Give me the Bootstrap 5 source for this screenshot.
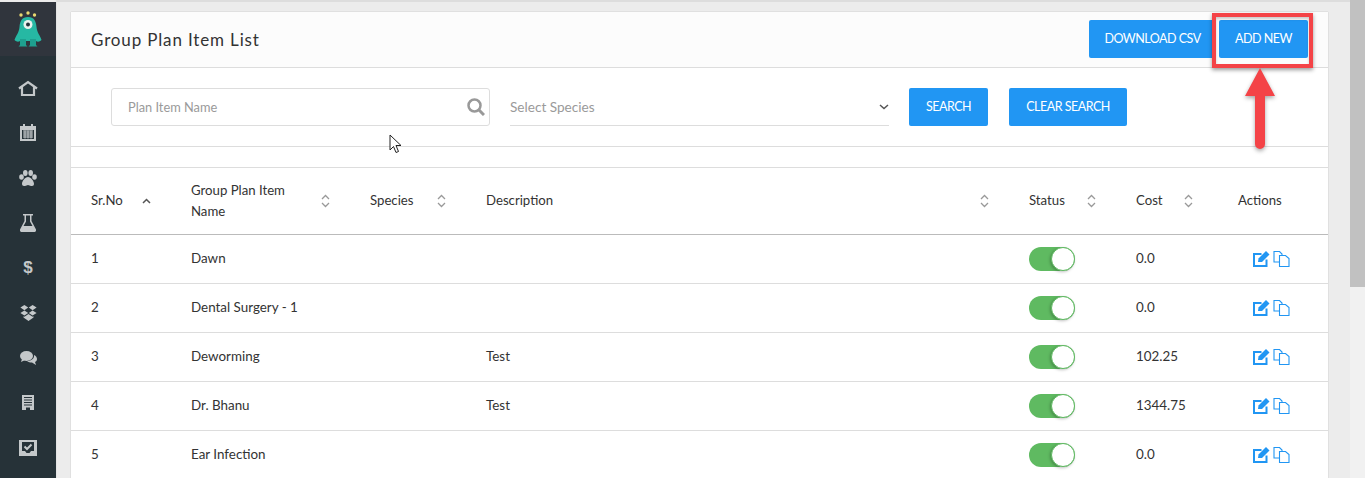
<!DOCTYPE html>
<html lang="en"><head><meta charset="utf-8"><title>Group Plan Item List</title>
<link href="https://cdn.jsdelivr.net/npm/bootstrap@5.3.0/dist/css/bootstrap.min.css" rel="stylesheet">
<style>
html,body{height:478px;overflow:hidden;}
body{font-family:"Lato","Noto Sans",sans-serif;font-size:13.5px;color:#333;background:#ececec;}
.shell{height:478px;}
.side{width:56px;background:#263238;margin-top:2px;flex:none;}
.side-logo{height:54px;background:#30353d;}
.side-item{height:45px;color:#c4c8ca;}
.side-nav{padding-top:9px;}
.dollar{font-family:"Liberation Sans",sans-serif;font-weight:700;font-size:17px;line-height:1;}
.work{flex:1;min-width:0;padding:9px 21px 0 13px;border-top:2px solid #ddd;border-left:1px solid #e4e4e4;}
.scroll-track{width:15px;background:#f1f1f1;flex:none;}
.scroll-thumb{height:287px;background:#c1c1c1;}
.sheet{border:1px solid #e0e0e0;border-radius:2px;background:#fff;height:600px;}
.sheet-head{height:56px;padding:8px 20px 0 20px;background:#fcfcfc;border-bottom:1px solid #ddd;}
.sheet-title{font-size:17px;letter-spacing:.85px;margin:0;font-weight:400;padding-top:10px;color:#333;}
.act{background:#2196f3;color:#fff;border:0;border-radius:2px;height:38px;font-size:12.5px;padding:0;letter-spacing:-.5px;text-transform:uppercase;line-height:38px;}
.act:hover{background:#2196f3;color:#fff;}
.w-dl{width:127px;}.w-add{width:89px;}.w-find{width:79px;}.w-clear{width:118px;}
.head-btns{gap:3px;}
.filters{height:79px;padding:20px 0 0 40px;border-bottom:1px solid #ddd;gap:20px;}
.find{width:379px;height:38px;border:1px solid #ddd;border-radius:3px;padding:0 4px 0 16px;}
.find input{border:0;outline:0;flex:1;font-size:12.8px;color:#999;padding:1px 0 0;background:transparent;min-width:0;}
.find input::placeholder{color:#9a9a9a;}
.pick{width:379px;height:38px;border-bottom:1px solid #ddd;color:#9a9a9a;font-size:13.6px;padding-top:1px;}
.clear-gap{margin-left:1px;}
.gap-strip{height:21px;border-bottom:1px solid #ddd;}
.grid-t{table-layout:fixed;width:100%;margin:0;color:#333;}
.grid-t th{font-weight:400;height:66px;padding:0 0 0 20px;vertical-align:middle;line-height:21px;border-bottom:1px solid #bbb;font-size:13.2px;}
.grid-t td{height:49px;padding:0 0 0 20px;vertical-align:middle;font-size:13.4px;border-bottom:1px solid #ddd;}
.th-in{padding-right:20px;}
.sort{flex:none;color:#999;}
.sort-up{color:#555;}
.tgl{width:46px;height:24px;border-radius:12px;background:#5fba61;position:relative;display:block;}
.tgl::after{content:"";position:absolute;right:0;top:0;width:24px;height:24px;border-radius:50%;background:#fff;border:1px solid #5fba61;box-shadow:-1px 1px 3px rgba(0,0,0,.25);}
.acts{padding-left:15px;gap:3px;}
.cell-actions{padding-left:25px!important;}
.mark-box{position:absolute;left:1212px;top:13px;width:101px;height:55px;border:4px solid #f44347;box-shadow:0 2px 4px rgba(0,0,0,.4),inset 0 2px 3px rgba(0,0,0,.2);pointer-events:none;}
.mark-arrow{position:absolute;left:1240px;top:66px;filter:drop-shadow(0 2px 2px rgba(0,0,0,.35));}
.cursor{position:absolute;left:389px;top:134px;}
</style></head><body>
<div class="shell d-flex">
<aside class="side">
<div class="side-logo d-flex align-items-center justify-content-center">
<svg width="28" height="36" viewBox="0 0 28 36"><circle cx="7" cy="4" r="1.700" fill="#e8d870"/><circle cx="14" cy="2" r="1.700" fill="#e8d870"/><circle cx="20.500" cy="4" r="1.700" fill="#e8d870"/><path d="M14 6C8 6 6 10 5.500 16 5 22 2 24 .5 29c2 2 4 2 5.500 1h16c1.500 1 3.500 1 5.500-1C26 24 23 22 22.500 16 22 10 20 6 14 6z" fill="#26b8a3"/><path d="M6 28h6v6l1.500 1.500h-9L6 34zM16 28h6v6l1.500 1.500h-9L16 34z" fill="#1ea08f"/><circle cx="14" cy="13.500" r="4.500" fill="#e9f2ee"/><circle cx="14" cy="13.500" r="2" fill="#26323a"/></svg>
</div>
<nav class="side-nav">
<div class="side-item d-flex align-items-center justify-content-center"><svg width="20" height="16" viewBox="0 0 20 16" fill="none" stroke="currentColor" stroke-width="2.200"><path d="M1 8.500 10 2l9 6.500M4 7v8h12V7"/></svg></div>
<div class="side-item d-flex align-items-center justify-content-center"><svg width="16" height="17" viewBox="0 0 16 17"><path fill="currentColor" fill-rule="evenodd" d="M0 2h3V0h2v2h6V0h2v2h3v15H0zM2 6v9h12V6z"/><path d="M3 7h10M3 9h10M3 11h10M3 13h10M5 6.500v8M8 6.500v8M11 6.500v8" stroke="currentColor" stroke-width="1"/></svg></div>
<div class="side-item d-flex align-items-center justify-content-center"><svg width="18" height="16" viewBox="0 0 18 16" fill="currentColor"><ellipse cx="2.500" cy="7" rx="2.300" ry="2.800"/><ellipse cx="6.300" cy="3" rx="2.300" ry="3"/><ellipse cx="11.700" cy="3" rx="2.300" ry="3"/><ellipse cx="15.500" cy="7" rx="2.300" ry="2.800"/><path d="M9 7c3 0 6 4 6 7 0 2-2 2-3 2s-2-1-3-1-2 1-3 1-3 0-3-2c0-3 3-7 6-7z"/></svg></div>
<div class="side-item d-flex align-items-center justify-content-center"><svg width="16" height="18" viewBox="0 0 16 18" fill="currentColor"><path d="M3 0h10v1.500h-1.500V7L16 15.500c.3 1.500-.5 2.500-2 2.500H2c-1.500 0-2.300-1-2-2.500L4.500 7V1.500H3zM6 1.500V7.400L3.500 12h9L10 7.400V1.500z" fill-rule="evenodd"/></svg></div>
<div class="side-item d-flex align-items-center justify-content-center dollar">$</div>
<div class="side-item d-flex align-items-center justify-content-center"><svg width="17" height="16" viewBox="0 0 17 16" fill="currentColor"><path d="M4.400 0 8.200 2.600 4.400 5.200 .4 2.600zM12.600 0 8.800 2.600 12.600 5.200 16.600 2.600zM4.400 5.400 8.200 8 4.400 10.600 .4 8zM12.600 5.400 8.800 8 12.600 10.600 16.600 8zM3.500 11.200 4.400 11.700 8.500 8.900 12.600 11.700 13.500 11.200V12.500L8.500 16 3.500 12.500z"/></svg></div>
<div class="side-item d-flex align-items-center justify-content-center"><svg width="17" height="14" viewBox="0 0 17 14" fill="currentColor"><ellipse cx="6.500" cy="5" rx="6.500" ry="5"/><path d="M2 8 1 11l4-2z"/><path d="M14 4c2 1 3 2.500 3 4 0 1.500-1 2.500-2 3l1 3-4-2.500c-2 0-3.500-.5-5-1.500 4.500 0 7.500-2.500 7-6z"/></svg></div>
<div class="side-item d-flex align-items-center justify-content-center"><svg width="12" height="15" viewBox="0 0 12 15"><path fill="currentColor" fill-rule="evenodd" d="M0 0h12v15H8v-2.500H4V15H0zM2 2v1h8V2zM2 4.500v1h8v-1zM2 7v1h8V7zM2 9.500v1h8v-1z"/></svg></div>
<div class="side-item d-flex align-items-center justify-content-center"><svg width="18" height="16" viewBox="0 0 18 16"><path fill="currentColor" fill-rule="evenodd" d="M0 0h18v16H0zM3 2v9h3l1.500 2h3l1.500-2h3V2z"/><path d="M5.500 6.500 8 9l4.500-4.500" fill="none" stroke="currentColor" stroke-width="2"/></svg></div>
</nav>
</aside>
<main class="work">
<section class="sheet">
<header class="sheet-head d-flex justify-content-between">
<h1 class="sheet-title">Group Plan Item List</h1>
<div class="d-flex head-btns"><button class="btn act w-dl">Download CSV</button><button class="btn act w-add">Add New</button></div>
</header>
<form class="filters d-flex align-items-start">
<label class="find d-flex align-items-center mb-0"><input type="text" placeholder="Plan Item Name" aria-label="Plan Item Name"><svg width="18" height="18" viewBox="0 0 18 18" fill="none" stroke="#999" stroke-width="2.500"><circle cx="7.500" cy="7.500" r="6"/><path d="m12 12 5 5" stroke-width="3"/></svg></label>
<div class="pick d-flex align-items-center justify-content-between"><span>Select Species</span><svg width="10" height="6" viewBox="0 0 10 6" fill="none" stroke="#555" stroke-width="1.500"><path d="m1 1 4 3.500L9 1"/></svg></div>
<button type="button" class="btn act w-find">Search</button>
<button type="button" class="btn act w-clear clear-gap">Clear Search</button>
</form>
<div class="gap-strip"></div>
<table class="table grid-t">
<colgroup><col style="width:100px"><col style="width:179px"><col style="width:116px"><col style="width:543px"><col style="width:107px"><col style="width:97px"><col></colgroup>
<thead><tr>
<th><div class="th-in d-flex justify-content-between align-items-center"><span>Sr.No</span><svg class="sort sort-up" width="9" height="6" viewBox="0 0 9 6" fill="none" stroke="currentColor" stroke-width="1.500"><path d="m1 5 3.500-3.500L8 5"/></svg></div></th>
<th><div class="th-in d-flex justify-content-between align-items-center"><span>Group Plan Item<br>Name</span><svg class="sort" width="9" height="14" viewBox="0 0 9 14" fill="none" stroke="currentColor" stroke-width="1.300"><path d="m1 5 3.500-3.500L8 5M1 9l3.500 3.500L8 9"/></svg></div></th>
<th><div class="th-in d-flex justify-content-between align-items-center"><span>Species</span><svg class="sort" width="9" height="14" viewBox="0 0 9 14" fill="none" stroke="currentColor" stroke-width="1.300"><path d="m1 5 3.500-3.500L8 5M1 9l3.500 3.500L8 9"/></svg></div></th>
<th><div class="th-in d-flex justify-content-between align-items-center"><span>Description</span><svg class="sort" width="9" height="14" viewBox="0 0 9 14" fill="none" stroke="currentColor" stroke-width="1.300"><path d="m1 5 3.500-3.500L8 5M1 9l3.500 3.500L8 9"/></svg></div></th>
<th><div class="th-in d-flex justify-content-between align-items-center"><span>Status</span><svg class="sort" width="9" height="14" viewBox="0 0 9 14" fill="none" stroke="currentColor" stroke-width="1.300"><path d="m1 5 3.500-3.500L8 5M1 9l3.500 3.500L8 9"/></svg></div></th>
<th><div class="th-in d-flex justify-content-between align-items-center"><span>Cost</span><svg class="sort" width="9" height="14" viewBox="0 0 9 14" fill="none" stroke="currentColor" stroke-width="1.300"><path d="m1 5 3.500-3.500L8 5M1 9l3.500 3.500L8 9"/></svg></div></th>
<th class="cell-actions">Actions</th>
</tr></thead>
<tbody id="rows"></tbody>
</table>
</section>
</main>
<div class="scroll-track"><div class="scroll-thumb"></div></div>
</div>
<div class="mark-box"></div>
<svg class="mark-arrow" width="40" height="90" viewBox="0 0 40 90"><path d="M20 2 35 30H25V78a5 5 0 0 1-10 0V30H5z" fill="#f44347"/></svg>
<svg class="cursor" width="14" height="20" viewBox="0 0 14 20"><path d="M1 1v15l3.500-3.500 2.500 6 2.500-1-2.500-6H12z" fill="#fff" stroke="#222" stroke-width="1"/></svg>
<script>
const data=[["1","Dawn","","0.0"],["2","Dental Surgery - 1","","0.0"],["3","Deworming","Test","102.25"],["4","Dr. Bhanu","Test","1344.75"],["5","Ear Infection","","0.0"]];
document.getElementById('rows').innerHTML=data.map(r=>`<tr><td>${r[0]}</td><td>${r[1]}</td><td></td><td>${r[2]}</td><td><span class="tgl"></span></td><td>${r[3]}</td><td class="cell-actions"><div class="acts d-flex align-items-center"><svg width="17" height="16" viewBox="0 0 17 16"><path d="M13.500 8.500V15H1V3h7.500" fill="none" stroke="#2196f3" stroke-width="2"/><path d="M5 11 5.500 7.500 13 0l3.500 3.500L9 11z" fill="#2196f3"/></svg><svg width="17" height="16" viewBox="0 0 17 16" fill="#fff" stroke="#2196f3" stroke-width="1.100"><path d="M1 .5h5.500l2.500 2.500v8H1z"/><path d="M6.500 4.500h6l3.500 3v8H6.500z"/></svg></div></td></tr>`).join('');
</script>
</body></html>
